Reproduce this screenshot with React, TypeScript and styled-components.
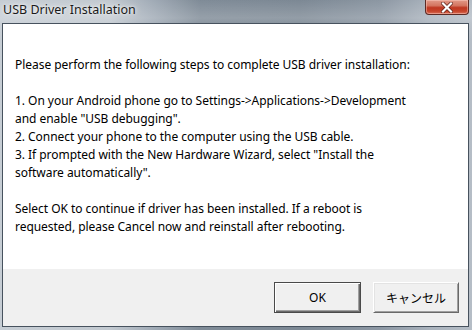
import React from "react";
import styled, { createGlobalStyle } from "styled-components";

const Global = createGlobalStyle`
  html, body { margin: 0; padding: 0; overflow: hidden; background: #fff; }
  body { font-family: "Noto Sans", "Noto Sans CJK JP", sans-serif; }
`;

const Window = styled.div`
  width: 472px;
  height: 330px;
  box-sizing: border-box;
  display: flex;
  flex-direction: column;
  padding: 0 3px 3px 2px;
  background:
    linear-gradient(180deg, rgba(255,255,255,0) 0px, rgba(255,255,255,0.18) 18px, rgba(255,255,255,0.1) 23px, rgba(255,255,255,0) 40px),
    linear-gradient(90deg, #c6cdd4 0px, #c2c9d0 110px, #a3adb8 150px, #7f8b97 200px, #7c8894 300px, #8c97a3 380px, #a9b2bc 430px, #b5bdc6 472px);
`;

const TitleBar = styled.div`
  height: 23px;
  display: flex;
  align-items: flex-start;
  justify-content: space-between;
`;

const Title = styled.span`
  font-family: "Noto Sans", "Noto Sans CJK JP", sans-serif;
  font-size: 12.5px;
  line-height: 20px;
  color: #1a1a1a;
  padding-left: 1px;
  text-shadow: 0 0 6px rgba(255,255,255,0.9), 0 0 3px rgba(255,255,255,0.8);
`;

const CloseButton = styled.div`
  width: 44px;
  height: 15px;
  box-sizing: border-box;
  border: 1px solid #5c2a24;
  border-top: none;
  border-radius: 0 0 4px 4px;
  background: linear-gradient(180deg, #e29a89 0%, #d47560 40%, #bf3822 55%, #c6442a 80%, #d8705a 100%);
  box-shadow: inset 0 0 0 1px rgba(255, 210, 200, 0.45);
  display: flex;
  align-items: center;
  justify-content: center;
`;

const Client = styled.div`
  flex: 1;
  display: flex;
  flex-direction: column;
  border: 1px solid #47525e;
`;

const Body = styled.div`
  flex: 1;
  background: #ffffff;
  padding: 32px 12px 0 12px;
`;

const Line = styled.div`
  font-family: "Noto Sans", "Noto Sans CJK JP", sans-serif;
  font-size: 12px;
  line-height: 18px;
  height: 18px;
  color: #000;
  white-space: nowrap;
  letter-spacing: -0.04px;
`;

const Footer = styled.div`
  height: 57px;
  background: #f0f0f0;
  display: flex;
  justify-content: flex-end;
  align-items: flex-start;
  gap: 12px;
  padding: 13px 9px 0 0;
  box-sizing: border-box;
`;

const Button = styled.div<{ $default?: boolean }>`
  width: ${(p) => (p.$default ? 87 : 86)}px;
  height: 31px;
  box-sizing: border-box;
  background: #f0f0f0;
  display: flex;
  align-items: center;
  justify-content: center;
  font-family: "Noto Sans", "Noto Sans CJK JP", sans-serif;
  font-size: 12px;
  color: #000;
  ${(p) =>
    p.$default
      ? `border: 1px solid #4a4a4a;
         box-shadow: inset 1px 1px #ffffff, inset -1px -1px #6a6a6a, inset -2px -2px #a0a0a0;`
      : `border-top: 1px solid #ffffff;
         border-left: 1px solid #ffffff;
         border-right: 1px solid #696969;
         border-bottom: 1px solid #696969;
         box-shadow: inset 1px 1px #e3e3e3, inset -1px -1px #a0a0a0;`}
`;

const CloseX = () => (
  <svg width="12" height="11" viewBox="0 0 12 11">
    <path d="M2 1.5 L10 9.5 M10 1.5 L2 9.5" stroke="#5a1e16" strokeWidth="3.6" strokeLinecap="square" />
    <path d="M2 1.5 L10 9.5 M10 1.5 L2 9.5" stroke="#ffffff" strokeWidth="2.2" strokeLinecap="square" />
  </svg>
);

const lines = [
  "Please perform the following steps to complete USB driver installation:",
  "",
  "1. On your Android phone go to Settings->Applications->Development",
  "and enable \"USB debugging\".",
  "2. Connect your phone to the computer using the USB cable.",
  "3. If prompted with the New Hardware Wizard, select \"Install the",
  "software automatically\".",
  "",
  "Select OK to continue if driver has been installed. If a reboot is",
  "requested, please Cancel now and reinstall after rebooting.",
];

export default function App() {
  return (
    <>
      <Global />
      <Window>
        <TitleBar>
          <Title>USB Driver Installation</Title>
          <CloseButton>
            <CloseX />
          </CloseButton>
        </TitleBar>
        <Client>
          <Body>
            {lines.map((l, i) => (
              <Line key={i}>{l}</Line>
            ))}
          </Body>
          <Footer>
            <Button $default>OK</Button>
            <Button>キャンセル</Button>
          </Footer>
        </Client>
      </Window>
    </>
  );
}
